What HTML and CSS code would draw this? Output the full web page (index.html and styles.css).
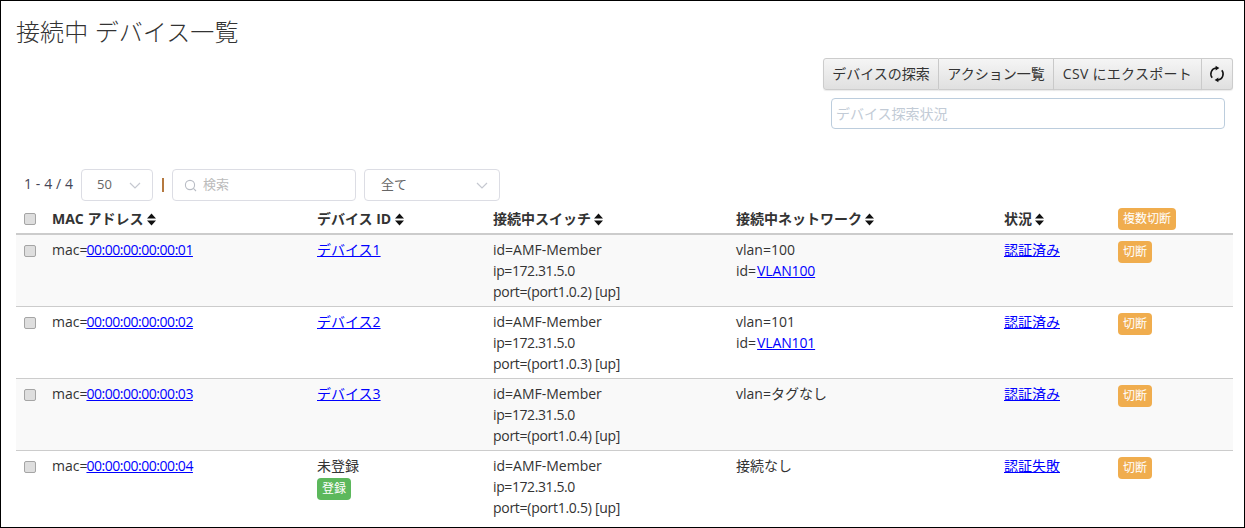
FILE: index.html
```html
<!DOCTYPE html>
<html lang="ja">
<head>
<meta charset="utf-8">
<title>接続中 デバイス一覧</title>
<link rel="stylesheet" href="styles.css">
</head>
<body>
<main class="frame">
  <h1 class="title">接続中 デバイス一覧</h1>
  <div class="actions">
    <div class="btn-group">
      <button class="btn btn-find">デバイスの探索</button>
      <button class="btn btn-list">アクション一覧</button>
      <button class="btn btn-csv">CSV にエクスポート</button>
      <button class="btn btn-icon" aria-label="更新">
        <svg width="16" height="16" viewBox="0 0 16 16"><path class="rf" d="M3.2 11.8A6 6 0 0 1 7 2.1"/><path class="rf" d="M12.8 4.2A6 6 0 0 1 9 13.9"/><path class="rfa" d="M6.6 -0.2L10.4 2.1 6.6 4.4z"/><path class="rfa" d="M9.4 11.6L5.6 13.9 9.4 16.2z"/></svg>
      </button>
    </div>
    <input class="status" placeholder="デバイス探索状況">
  </div>
  <div class="filters">
    <span class="count">1 - 4 / 4</span>
    <div class="select select-page"><span>50</span><svg class="chev" width="12" height="7" viewBox="0 0 12 7"><path d="M1 1l5 5 5-5"/></svg></div>
    <span class="sep"></span>
    <div class="search"><svg width="13" height="13" viewBox="0 0 13 13"><circle cx="6" cy="6" r="4.6"/><path d="M9.4 9.4l2.6 2.6"/></svg><span>検索</span></div>
    <div class="select select-all"><span>全て</span><svg class="chev" width="12" height="7" viewBox="0 0 12 7"><path d="M1 1l5 5 5-5"/></svg></div>
  </div>
  <table class="devices">
    <colgroup><col class="c1"><col class="c2"><col class="c3"><col class="c4"><col class="c5"><col class="c6"><col class="c7"></colgroup>
    <thead>
      <tr>
        <th><span class="check"></span></th>
        <th>MAC アドレス<svg class="sort sort-wide" width="9" height="13" viewBox="0 0 9 13"><path d="M4.5 0.5L9 5.5H0zM0 7.5h9L4.5 12.5z"/></svg></th>
        <th>デバイス ID<svg class="sort sort-wide" width="9" height="13" viewBox="0 0 9 13"><path d="M4.5 0.5L9 5.5H0zM0 7.5h9L4.5 12.5z"/></svg></th>
        <th>接続中スイッチ<svg class="sort" width="9" height="13" viewBox="0 0 9 13"><path d="M4.5 0.5L9 5.5H0zM0 7.5h9L4.5 12.5z"/></svg></th>
        <th>接続中ネットワーク<svg class="sort" width="9" height="13" viewBox="0 0 9 13"><path d="M4.5 0.5L9 5.5H0zM0 7.5h9L4.5 12.5z"/></svg></th>
        <th>状況<svg class="sort" width="9" height="13" viewBox="0 0 9 13"><path d="M4.5 0.5L9 5.5H0zM0 7.5h9L4.5 12.5z"/></svg></th>
        <th><span class="badge warn">複数切断</span></th>
      </tr>
    </thead>
    <tbody>
      <tr>
        <td><span class="check"></span></td>
        <td>mac=<a href="#" class="mac">00:00:00:00:00:01</a></td>
        <td><a href="#">デバイス1</a></td>
        <td>id=AMF-Member<br><span class="ip">ip=172.31.5.0</span><br><span class="num">port=(port1.0.2) [up]</span></td>
        <td>vlan=100<br>id=<a href="#" class="vlan">VLAN100</a></td>
        <td><a href="#">認証済み</a></td>
        <td><span class="badge warn">切断</span></td>
      </tr>
      <tr>
        <td><span class="check"></span></td>
        <td>mac=<a href="#" class="mac">00:00:00:00:00:02</a></td>
        <td><a href="#">デバイス2</a></td>
        <td>id=AMF-Member<br><span class="ip">ip=172.31.5.0</span><br><span class="num">port=(port1.0.3) [up]</span></td>
        <td>vlan=101<br>id=<a href="#" class="vlan">VLAN101</a></td>
        <td><a href="#">認証済み</a></td>
        <td><span class="badge warn">切断</span></td>
      </tr>
      <tr>
        <td><span class="check"></span></td>
        <td>mac=<a href="#" class="mac">00:00:00:00:00:03</a></td>
        <td><a href="#">デバイス3</a></td>
        <td>id=AMF-Member<br><span class="ip">ip=172.31.5.0</span><br><span class="num">port=(port1.0.4) [up]</span></td>
        <td>vlan=タグなし</td>
        <td><a href="#">認証済み</a></td>
        <td><span class="badge warn">切断</span></td>
      </tr>
      <tr>
        <td><span class="check"></span></td>
        <td>mac=<a href="#" class="mac">00:00:00:00:00:04</a></td>
        <td>未登録<br><span class="badge ok">登録</span></td>
        <td>id=AMF-Member<br><span class="ip">ip=172.31.5.0</span><br><span class="num">port=(port1.0.5) [up]</span></td>
        <td>接続なし</td>
        <td><a href="#">認証失敗</a></td>
        <td><span class="badge warn">切断</span></td>
      </tr>
    </tbody>
  </table>
</main>
</body>
</html>
```
FILE: styles.css
```css
* { box-sizing: border-box; }
html, body { margin: 0; padding: 0; }
body {
  font-family: "Open Sans", "Noto Sans CJK JP", sans-serif;
  font-size: 14px;
  line-height: 21px;
  color: #333;
  background: #fff;
}
.frame {
  width: 1245px;
  height: 528px;
  border: 1px solid #000;
  padding: 0 11px 0 15px;
  overflow: hidden;
}
.title {
  margin: 0;
  padding-top: 14px;
  height: 57px;
  font-size: 24px;
  line-height: 34px;
  font-weight: 300;
  letter-spacing: .1px;
  color: #333;
}
.actions {
  display: flex;
  flex-direction: column;
  align-items: flex-end;
  height: 111px;
}
.btn-group { display: flex; height: 32px; }
.btn {
  height: 32px;
  padding: 0 0 2px;
  font: inherit;
  color: #333;
  white-space: nowrap;
  border: 1px solid #ccc;
  border-left-width: 0;
  background: linear-gradient(#f5f5f5, #e0e0e0);
  box-shadow: 0 1px 1px rgba(0,0,0,.08);
}
.btn-find { width: 116px; border-left-width: 1px; border-radius: 3px 0 0 3px; }
.btn-list { width: 115px; }
.btn-csv { width: 148px; letter-spacing: .3px; }
.btn-icon {
  width: 31px;
  padding: 0;
  display: flex;
  align-items: center;
  justify-content: center;
  border-radius: 0 3px 3px 0;
}
.btn-icon svg { overflow: visible; }
.rf { fill: none; stroke: #111; stroke-width: 1.5; }
.rfa { fill: #111; }
.status {
  width: 394px;
  height: 31px;
  margin: 8px 8px 0 0;
  padding: 0 4px;
  font: inherit;
  border: 1px solid #bccddd;
  border-radius: 4px;
  outline: none;
}
.status::placeholder { color: #c2cbd6; }
.filters {
  display: flex;
  align-items: center;
  height: 32px;
  padding-left: 8px;
}
.count { color: #445; width: 57px; white-space: nowrap; padding-bottom: 4px; letter-spacing: .1px; }
.select, .search {
  height: 32px;
  display: flex;
  align-items: center;
  border: 1px solid #dcdde4;
  border-radius: 4px;
  color: #666;
  font-size: 13px;
}
.select span, .search span { padding-bottom: 2px; }
.select { justify-content: space-between; padding: 0 11px 0 15px; }
.select-page { width: 72px; }
.select-all { width: 136px; margin-left: 8px; padding-left: 16px; }
.chev { fill: none; stroke: #c5c8d0; stroke-width: 1.2; }
.sep { width: 2px; height: 14px; background: #b5793f; margin: 0 8px 0 9px; }
.search { width: 184px; padding-left: 11px; gap: 6px; color: #bbb; }
.search svg { fill: none; stroke: #b8bcc4; stroke-width: 1.1; }
.devices {
  width: 1217px;
  margin-top: 4px;
  table-layout: fixed;
  border-collapse: collapse;
}
.c1 { width: 28px; } .c2 { width: 265px; } .c3 { width: 176px; } .c4 { width: 243px; }
.c5 { width: 268px; } .c6 { width: 114px; } .c7 { width: 123px; }
th {
  height: 29px;
  padding: 0 8px 2px;
  text-align: left;
  font-weight: 700;
  border-bottom: 2px solid #ccc;
  vertical-align: middle;
}
td {
  padding: 4px 8px;
  height: 72px;
  vertical-align: top;
  border-bottom: 1px solid #ccc;
  white-space: nowrap;
}
tbody tr:nth-child(odd) td { background: #f9f9f9; }
tbody tr:last-child td { border-bottom: 0; }
a { color: #00f; text-decoration: underline; }
.mac { letter-spacing: -.47px; margin-left: -1px; }
.vlan { letter-spacing: -.15px; margin-left: 1px; }
.num { letter-spacing: -.28px; }
.ip { letter-spacing: -.4px; }
.sort { margin-left: 3px; vertical-align: -2px; fill: #111; }
.sort-wide { margin-left: 4px; }
.check {
  display: block;
  width: 12px;
  height: 12px;
  margin-top: 6px;
  border: 1px solid #a5a5a5;
  border-radius: 2px;
  background: #dedede;
}
th .check { margin-top: 1px; }
.badge {
  display: inline-block;
  height: 22px;
  padding: 0 5px;
  font-size: 12px;
  line-height: 22px;
  font-weight: 400;
  color: #fff;
  border-radius: 4px;
}
th .badge { vertical-align: top; margin-top: 1px; }
td .badge { margin-top: 2px; vertical-align: top; }
.warn { background: #f0ad4e; }
.ok { background: #5cb85c; }
```
